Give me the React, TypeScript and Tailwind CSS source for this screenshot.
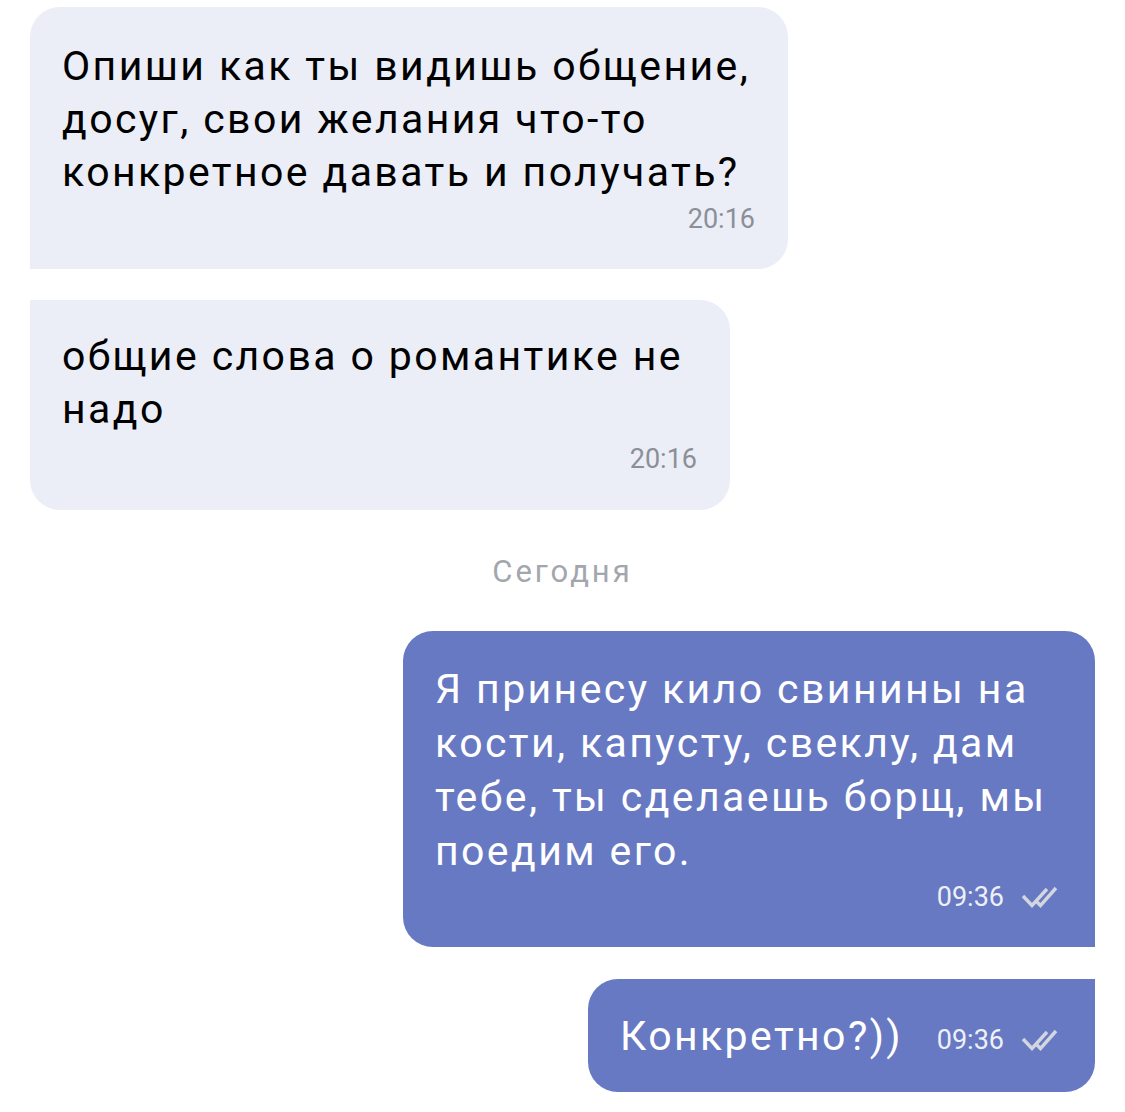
import React from 'react';

const font = { fontFamily: 'Roboto, "Noto Sans", sans-serif' };

const DoubleCheck: React.FC = () => (
    <svg width="38" height="24" viewBox="0 0 38 24" fill="none" className="shrink-0">
        <path d="M2 11 L11 20.5 L26 4" stroke="#d3d6de" strokeWidth="3.4" />
        <path d="M16 17 L19.5 20.5 L35 3" stroke="#d3d6de" strokeWidth="3.4" />
    </svg>
);

const App: React.FC = () => {
    return (
        <div className="w-[1125px] h-[1112px] bg-white overflow-hidden flex flex-col" style={font}>
            {/* входящие */}
            <div className="mt-[7px] ml-[30px] w-[758px] bg-[#ebeef6] rounded-[30px] rounded-bl-none pt-[33px] pl-[32px] pr-[33px] pb-[35px]">
                <p className="text-[41px] leading-[53px] text-black tracking-[2.4px] whitespace-nowrap">
                    Опиши как ты видишь общение,<br />досуг, свои желания что-то<br />конкретное давать и получать?
                </p>
                <div className="mt-[5px] flex justify-end text-[27px] leading-[30px] text-[#8b8f98]">20:16</div>
            </div>

            <div className="mt-[31px] ml-[30px] w-[700px] bg-[#ebeef6] rounded-[30px] rounded-tl-none pt-[30px] pl-[32px] pr-[33px] pb-[36px]">
                <p className="text-[41px] leading-[53px] text-black tracking-[2.4px] whitespace-nowrap">
                    общие слова о романтике не<br />надо
                </p>
                <div className="mt-[8px] flex justify-end text-[27px] leading-[30px] text-[#8b8f98]">20:16</div>
            </div>

            <div className="mt-[44px] text-center text-[31px] leading-[36px] text-[#a3a6ad] tracking-[3px]">Сегодня</div>

            {/* исходящие */}
            <div className="mt-[41px] ml-[403px] w-[692px] bg-[#6779c2] rounded-[30px] rounded-br-none pt-[31px] pl-[32px] pr-[36px] pb-[35px]">
                <p className="text-[41px] leading-[54px] text-white tracking-[2.4px] whitespace-nowrap">
                    Я принесу кило свинины на<br />кости, капусту, свеклу, дам<br />тебе, ты сделаешь борщ, мы<br />поедим его.
                </p>
                <div className="mt-[4px] flex justify-end items-center gap-[17px] text-[27px] leading-[30px] text-[#eef0f8]">
                    <span>09:36</span>
                    <DoubleCheck />
                </div>
            </div>

            <div className="mt-[32px] ml-[588px] w-[507px] h-[113px] bg-[#6779c2] rounded-[30px] rounded-tr-none pl-[32px] pr-[36px] flex items-center">
                <span className="text-[41px] leading-[54px] text-white tracking-[2.4px] whitespace-nowrap">Конкретно?))</span>
                <div className="ml-auto flex items-center gap-[17px] text-[27px] leading-[30px] text-[#eef0f8] pt-[8px]">
                    <span>09:36</span>
                    <DoubleCheck />
                </div>
            </div>
        </div>
    );
};

export default App;
